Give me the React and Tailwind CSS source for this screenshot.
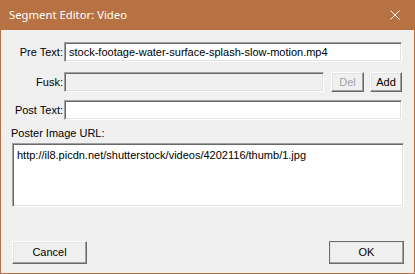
const sunken =
  'border border-t-[#a0a0a0] border-l-[#a0a0a0] border-r-white border-b-white shadow-[inset_1px_1px_0_#696969,inset_-1px_-1px_0_#e3e3e3]'
const raised =
  'border border-t-white border-l-white border-r-[#696969] border-b-[#696969] shadow-[inset_-1px_-1px_0_#a0a0a0,inset_1px_1px_0_#e3e3e3] bg-[#f0f0f0]'

const Field = ({ value, disabled, className }) => (
  <div
    className={`h-[20px] flex items-center px-[4px] ${sunken} ${disabled ? 'bg-[#f0f0f0]' : 'bg-white'} ${className || ''}`}
  >
    <span className="whitespace-nowrap overflow-hidden">{value}</span>
  </div>
)

const Label = ({ children }) => (
  <div className="w-[63px] shrink-0 text-right pr-[1px]">{children}</div>
)

export default function App() {
  return (
    <div
      className="w-[415px] h-[274px] bg-[#b87142] flex flex-col text-[11px] text-black"
      style={{ fontFamily: '"Liberation Sans", Arial, sans-serif' }}
    >
      {/* Title bar */}
      <div className="h-[30px] shrink-0 flex items-center justify-between pl-[9px] pr-[11px] text-white">
        <span className="text-[11.3px]" style={{ fontFamily: '"Noto Sans", "Open Sans", sans-serif' }}>
          Segment Editor: Video
        </span>
        <svg width="10" height="10" viewBox="0 0 10 10" className="mr-[4px]">
          <path d="M0.5 0.5 L9.5 9.5 M9.5 0.5 L0.5 9.5" stroke="white" strokeWidth="1" />
        </svg>
      </div>

      <div className="flex-1 mx-[1px] mb-[1px] bg-[#f0f0f0] flex flex-col">
        {/* Pre Text */}
        <div className="flex items-center mt-[12px]">
          <Label>Pre Text:</Label>
          <Field value="stock-footage-water-surface-splash-slow-motion.mp4" className="w-[338px]" />
        </div>

        {/* Fusk */}
        <div className="flex items-center mt-[10px]">
          <Label>Fusk:</Label>
          <Field disabled value="" className="w-[260px]" />
          <button className={`ml-[7px] w-[33px] h-[20px] text-[#a0a0a0] ${raised}`}>Del</button>
          <button className={`ml-[6px] w-[32px] h-[20px] ${raised}`}>Add</button>
        </div>

        {/* Post Text */}
        <div className="flex items-center mt-[8px]">
          <Label>Post Text:</Label>
          <Field value="" className="w-[338px]" />
        </div>

        {/* Poster Image URL */}
        <div className="ml-[10px] mt-[7px] leading-[13px]">Poster Image URL:</div>
        <div className={`ml-[11px] mt-[3px] w-[392px] h-[64px] bg-white px-[4px] pt-[3px] ${sunken}`}>
          http://il8.picdn.net/shutterstock/videos/4202116/thumb/1.jpg
        </div>

        {/* Footer buttons */}
        <div className="flex justify-between mt-[34px] ml-[11px] mr-[10px]">
          <button className={`w-[75px] h-[23px] ${raised}`}>Cancel</button>
          <button className={`w-[75px] h-[23px] outline outline-1 outline-[#6e6e6e] -outline-offset-1 ${raised}`}>
            OK
          </button>
        </div>
      </div>
    </div>
  )
}
